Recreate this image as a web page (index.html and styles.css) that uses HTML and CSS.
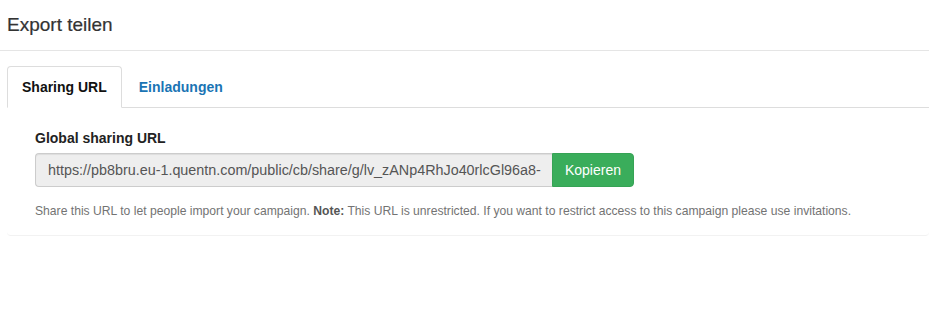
FILE: index.html
```html
<!DOCTYPE html>
<html lang="de">
<head>
  <meta charset="UTF-8">
  <title>Export teilen</title>
  <link rel="stylesheet" href="styles.css">
</head>
<body>
  <div class="modal-header">
    <h4>Export teilen</h4>
  </div>

  <div class="modal-body">
    <ul class="nav-tabs">
      <li class="active"><a href="#">Sharing URL</a></li>
      <li><a href="#">Einladungen</a></li>
    </ul>

    <div class="panel">
      <label for="shareUrl">Global sharing URL</label>
      <div class="input-group">
        <input type="text" id="shareUrl" readonly value="https://pb8bru.eu-1.quentn.com/public/cb/share/g/lv_zANp4RhJo40rlcGl96a8-">
        <button class="btn-success">Kopieren</button>
      </div>
      <p class="help-block">Share this URL to let people import your campaign. <b>Note:</b> This URL is unrestricted. If you want to restrict access to this campaign please use invitations.</p>
    </div>
  </div>
</body>
</html>
```
FILE: styles.css
```css
body {
  margin: 0;
  font-family: "Liberation Sans", Arial, sans-serif;
  font-size: 14px;
  line-height: 20px;
  color: #333;
  background: white;
}
.modal-header {
  padding: 10px 7px 11px;
  border-bottom: 1px solid #e5e5e5;
}
.modal-header h4 {
  margin: 0;
  font-size: 19px;
  font-weight: normal;
  line-height: 29px;
  color: #333;
  -webkit-text-stroke: 0.2px #333;
}
.modal-body {
  padding: 15px 0 0 7px;
}
.nav-tabs {
  display: flex;
  margin: 0;
  padding: 0;
  list-style: none;
  border-bottom: 1px solid #ddd;
}
.nav-tabs li {
  margin-bottom: -1px;
  margin-right: 2px;
}
.nav-tabs a {
  display: block;
  padding: 10px 14px;
  font-weight: bold;
  color: #1a74b4;
  text-decoration: none;
  border: 1px solid transparent;
  border-radius: 4px 4px 0 0;
}
.nav-tabs .active a {
  color: #111;
  background: white;
  border-color: #ddd #ddd transparent;
}
.panel {
  padding: 20px 28px 15px;
  border-radius: 0 0 4px 4px;
  border-bottom: 1px solid #f2f2f2;
}
label {
  display: block;
  margin-bottom: 5px;
  font-weight: bold;
  color: #222;
}
.input-group {
  display: flex;
  width: 599px;
}
.input-group input {
  flex: 1;
  min-width: 0;
  height: 34px;
  box-sizing: border-box;
  padding: 6px 4px 6px 12px;
  font-family: inherit;
  font-size: 14.35px;
  color: #555;
  background: #eee;
  border: 1px solid #ccc;
  border-right: none;
  border-radius: 4px 0 0 4px;
  box-shadow: inset 0 1px 1px rgba(0,0,0,0.075);
  outline: none;
}
.btn-success {
  height: 34px;
  padding: 6px 12px;
  font-family: inherit;
  font-size: 14px;
  color: white;
  background: #3aad5b;
  border: 1px solid #36a355;
  border-radius: 0 4px 4px 0;
  cursor: pointer;
}
.help-block {
  margin: 16px 0 0;
  font-size: 12.15px;
  line-height: 17px;
  color: #737373;
}
.help-block b {
  color: #555;
}
```
